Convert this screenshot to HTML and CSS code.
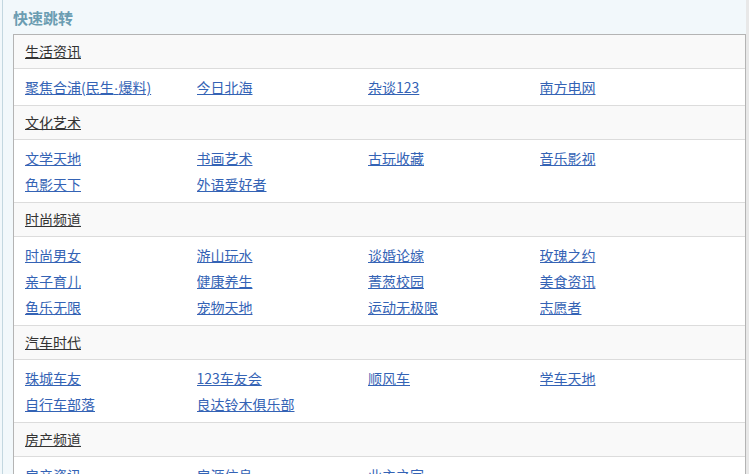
FILE: index.html
```html
<!DOCTYPE html>
<html lang="zh-CN">
<head>
    <meta charset="UTF-8">
    <title>快速跳转</title>
    <link rel="stylesheet" href="styles.css">
</head>
<body>
    <div class="panel">
        <h2 class="panel-title">快速跳转</h2>
        <div class="jump-box">
            <div class="group">
                <div class="group-head"><a href="#">生活资讯</a></div>
                <ul class="group-links">
                    <li><a href="#">聚焦合浦(民生<span class="dot">·</span>爆料)</a></li>
                    <li><a href="#">今日北海</a></li>
                    <li><a href="#">杂谈123</a></li>
                    <li><a href="#">南方电网</a></li>
                </ul>
            </div>
            <div class="group">
                <div class="group-head"><a href="#">文化艺术</a></div>
                <ul class="group-links">
                    <li><a href="#">文学天地</a></li>
                    <li><a href="#">书画艺术</a></li>
                    <li><a href="#">古玩收藏</a></li>
                    <li><a href="#">音乐影视</a></li>
                    <li><a href="#">色影天下</a></li>
                    <li><a href="#">外语爱好者</a></li>
                </ul>
            </div>
            <div class="group">
                <div class="group-head"><a href="#">时尚频道</a></div>
                <ul class="group-links">
                    <li><a href="#">时尚男女</a></li>
                    <li><a href="#">游山玩水</a></li>
                    <li><a href="#">谈婚论嫁</a></li>
                    <li><a href="#">玫瑰之约</a></li>
                    <li><a href="#">亲子育儿</a></li>
                    <li><a href="#">健康养生</a></li>
                    <li><a href="#">菁葱校园</a></li>
                    <li><a href="#">美食资讯</a></li>
                    <li><a href="#">鱼乐无限</a></li>
                    <li><a href="#">宠物天地</a></li>
                    <li><a href="#">运动无极限</a></li>
                    <li><a href="#">志愿者</a></li>
                </ul>
            </div>
            <div class="group">
                <div class="group-head"><a href="#">汽车时代</a></div>
                <ul class="group-links">
                    <li><a href="#">珠城车友</a></li>
                    <li><a href="#">123车友会</a></li>
                    <li><a href="#">顺风车</a></li>
                    <li><a href="#">学车天地</a></li>
                    <li><a href="#">自行车部落</a></li>
                    <li><a href="#">良达铃木俱乐部</a></li>
                </ul>
            </div>
            <div class="group">
                <div class="group-head"><a href="#">房产频道</a></div>
                <ul class="group-links">
                    <li><a href="#">房产资讯</a></li>
                    <li><a href="#">房源信息</a></li>
                    <li><a href="#">业主之家</a></li>
                </ul>
            </div>
        </div>
    </div>
</body>
</html>
```

FILE: styles.css
```css
body {
    margin: 0;
    background: #f2f8fb;
    font-family: "Noto Sans CJK SC", "Liberation Sans", sans-serif;
    font-size: 14px;
    overflow: hidden;
}
.panel {
    margin-left: 2px;
    border-left: 1px solid #c3d7e0;
    border-right: 3px solid #e8e8e8;
    padding: 0 0 0 10px;
}
.panel-title {
    margin: 0;
    height: 34px;
    line-height: 36px;
    font-size: 15px;
    font-weight: bold;
    color: #6b9db2;
}
.jump-box {
    background: #fff;
    border: 1px solid #b4b4b4;
}
.group-head {
    background: #f9f9f9;
    height: 33px;
    line-height: 33px;
    padding-left: 11px;
    border-bottom: 1px solid #dcdcdc;
}
.group-head a {
    color: #333;
}
.group-links {
    list-style: none;
    margin: 0;
    padding: 5px 0 5px 11px;
    display: grid;
    grid-template-columns: repeat(4, 171.5px);
    border-bottom: 1px solid #dcdcdc;
}
.group-links li {
    height: 26px;
    line-height: 26px;
    overflow: hidden;
}
.group-links a {
    color: #3463b5;
}
.dot {
    font-family: "Liberation Sans", sans-serif;
    line-height: 1;
}
```
